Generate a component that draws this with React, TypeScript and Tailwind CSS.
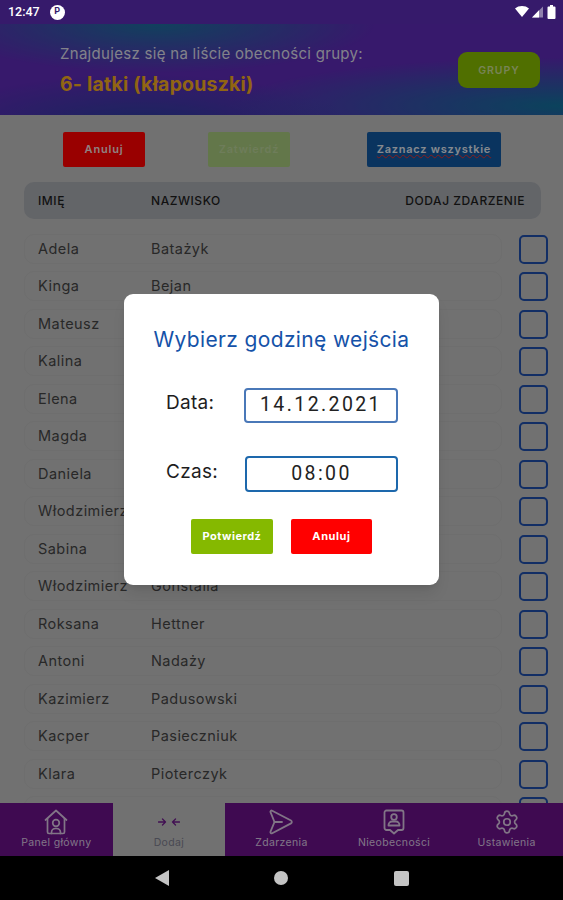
import { Settings } from "lucide-react";

const rows: [string, string][] = [
  ["Adela", "Batażyk"],
  ["Kinga", "Bejan"],
  ["Mateusz", ""],
  ["Kalina", ""],
  ["Elena", ""],
  ["Magda", ""],
  ["Daniela", ""],
  ["Włodzimierz", ""],
  ["Sabina", ""],
  ["Włodzimierz", "Gonstalla"],
  ["Roksana", "Hettner"],
  ["Antoni", "Nadaży"],
  ["Kazimierz", "Padusowski"],
  ["Kacper", "Pasieczniuk"],
  ["Klara", "Pioterczyk"],
  ["", ""],
];

function HomeIcon() {
  return (
    <svg width="24" height="26" viewBox="0 0 24 26" fill="none" stroke="currentColor" strokeWidth="1.7" strokeLinejoin="round" strokeLinecap="round">
      <path d="M1.500 11 12 1.500 22.500 11" />
      <path d="M3.500 9.500V23a1.500 1.500 0 0 0 1.500 1.500h14a1.500 1.500 0 0 0 1.500-1.500V9.500" />
      <circle cx="12" cy="14" r="3.300" />
      <path d="M7.500 24.500v-1a4 4 0 0 1 4-4h1a4 4 0 0 1 4 4v1" />
    </svg>
  );
}

function SendIcon() {
  return (
    <svg width="24" height="26" viewBox="0 0 24 26" fill="none" stroke="currentColor" strokeWidth="1.800" strokeLinejoin="round" strokeLinecap="round">
      <path d="M1.500 3.200c-.4-1.200.6-2 1.700-1.500l18.800 9.800c1.100.6 1.100 2.300 0 2.900L3.200 24.200c-1.100.5-2.100-.4-1.700-1.500L5.500 13z" />
      <path d="M5.500 13H13" />
    </svg>
  );
}

function AbsenceIcon() {
  return (
    <svg width="22" height="26" viewBox="0 0 22 26" fill="none" stroke="currentColor" strokeWidth="1.800" strokeLinejoin="round" strokeLinecap="round">
      <path d="M3.500 1.500h15a2 2 0 0 1 2 2V19a2 2 0 0 1-2 2H15l-4 3.500L7 21H3.500a2 2 0 0 1-2-2V3.500a2 2 0 0 1 2-2z" />
      <circle cx="11" cy="8" r="2.800" />
      <path d="M5.500 16.500V16a3.500 3.500 0 0 1 3.500-3.500h4a3.500 3.500 0 0 1 3.500 3.500v.5z" />
    </svg>
  );
}

function ArrowsIcon() {
  return (
    <svg width="22" height="10" viewBox="0 0 22 10" fill="none" stroke="currentColor" strokeWidth="1.300" strokeLinecap="round" strokeLinejoin="round">
      <path d="M0.500 5h7M4.500 2l3 3-3 3" />
      <path d="M21.500 5h-7M17.500 2l-3 3 3 3" />
    </svg>
  );
}

function Tab({ label, icon, active }: { label: string; icon: React.ReactNode; active?: boolean }) {
  return (
    <div className={`flex-1 h-full flex flex-col items-center justify-start pt-[6px] ${active ? "bg-[#bdbdbd] text-[#6d1a8a]" : "text-[#d8c4e0]"}`}>
      <div className="h-[26px] flex items-center justify-center">{icon}</div>
      <span className={`mt-[1px] text-[10.5px] leading-[14px] tracking-[0.35px] whitespace-nowrap ${active ? "text-[#7a7a8a]" : ""}`}>{label}</span>
    </div>
  );
}

export default function App() {
  return (
    <div className="w-[563px] h-[900px] flex flex-col overflow-hidden bg-black font-['Inter','Liberation_Sans',sans-serif]">
      {/* Status bar */}
      <div className="h-[24px] shrink-0 bg-[#361a6b] flex items-center justify-between pl-[8px] pr-[7px] text-white">
        <div className="flex items-center gap-[10px]">
          <span className="text-[12.5px] font-medium font-['Roboto',sans-serif]">12:47</span>
          <span className="w-[15px] h-[15px] rounded-full bg-white flex items-center justify-center text-[9px] font-bold text-[#361a6b] font-['Roboto',sans-serif]">P</span>
        </div>
        <div className="flex items-center gap-[2px]">
          <svg width="14" height="12" viewBox="0 0 14 12" fill="white"><path d="M0 2.500C3.800-.8 10.200-.8 14 2.500L7 11z" /></svg>
          <svg width="12" height="12" viewBox="0 0 12 12"><path d="M12 0.500V11.500H1z" fill="white" fillOpacity="0.45" /><path d="M8 4.300V11.500H1z" fill="white" /></svg>
          <svg width="9" height="14" viewBox="0 0 9 14" className="ml-[2px]"><path d="M3 0h3v1.500h1.500A1 1 0 0 1 8.500 2.500V13a1 1 0 0 1-1 1h-6a1 1 0 0 1-1-1V2.500a1 1 0 0 1 1-1H3z" fill="white" /></svg>
        </div>
      </div>

      {/* App body */}
      <div className="relative flex-1 flex flex-col overflow-hidden bg-[#bdbdbd]">
        <header className="h-[91px] shrink-0 flex items-center justify-between pl-[60px] pr-[23px] bg-[radial-gradient(ellipse_at_28%_0%,#1d6c9c_0%,transparent_38%),radial-gradient(ellipse_at_100%_90%,#12709a_0%,transparent_42%),radial-gradient(ellipse_at_25%_110%,#2a3f9c_0%,transparent_35%),linear-gradient(90deg,#5c2ab4,#5c2ab4)]">
          <div className="flex flex-col">
            <span className="text-[15px] leading-[20px] tracking-[0.3px] text-[#d9d9e6] whitespace-nowrap">Znajdujesz się na liście obecności grupy:</span>
            <span className="mt-[8px] text-[19.5px] leading-[24px] font-bold tracking-[0.2px] text-[#f2a91f] whitespace-nowrap">6- latki (kłapouszki)</span>
          </div>
          <div className="w-[82px] h-[36px] rounded-[9px] bg-[#86b900] flex items-center justify-center pt-[2px] text-[10.5px] font-semibold tracking-[1px] text-[#c8dc90]">GRUPY</div>
        </header>

        <div className="mt-[17px] h-[35px] shrink-0 flex items-stretch pl-[63px]">
          <div className="w-[82px] rounded-[2px] bg-[#ff0000] flex items-center justify-center text-[11px] font-semibold tracking-[0.8px] text-[#f0d8d8]">Anuluj</div>
          <div className="ml-[63px] w-[82px] rounded-[2px] bg-[#a6c67c] flex items-center justify-center text-[11px] font-semibold tracking-[0.8px] text-[#b7d096]">Zatwierdź</div>
          <div className="ml-[77px] w-[134px] rounded-[2px] bg-[#12589e] flex items-center justify-center text-[11px] font-semibold tracking-[0.75px] text-[#e0e6ee] whitespace-nowrap">
            <span className="underline decoration-wavy decoration-[#e03030] decoration-1">Zaznacz wszystkie</span>
          </div>
        </div>

        <div className="mt-[15px] mx-[24px] w-[517px] h-[37px] shrink-0 rounded-[10px] bg-[#a5a8ae] flex items-center pl-[14px] pr-[16px] text-[12px] font-medium tracking-[0.55px] text-[#1d1d1d]">
          <span className="w-[113px]">IMIĘ</span>
          <span>NAZWISKO</span>
          <span className="ml-auto">DODAJ ZDARZENIE</span>
        </div>

        <div className="mt-[11px] flex-1 min-h-0 overflow-hidden flex flex-col pl-[24px]">
          {rows.map(([first, last], i) => (
            <div key={i} className="h-[37.5px] shrink-0 flex items-center">
              <div className="w-[478px] h-[30px] rounded-[10px] border border-[#b7b7b7] flex items-center pl-[13px] text-[14.5px] tracking-[0.45px] text-[#444444]">
                <span className="w-[113px] whitespace-nowrap">{first}</span>
                <span className="whitespace-nowrap">{last}</span>
              </div>
              <div className="ml-[17px] mt-[1px] w-[29px] h-[29px] rounded-[5px] border-2 border-[#1f4ea8]" />
            </div>
          ))}
        </div>

        <nav className="h-[53px] shrink-0 flex bg-[#6a1188] relative">
          <Tab label="Panel główny" icon={<HomeIcon />} />
          <Tab label="Dodaj" icon={<ArrowsIcon />} active />
          <Tab label="Zdarzenia" icon={<SendIcon />} />
          <Tab label="Nieobecności" icon={<AbsenceIcon />} />
          <Tab label="Ustawienia" icon={<Settings size={26} strokeWidth={1.6} />} />
        </nav>

        {/* Dim + dialog */}
        <div className="absolute inset-0 z-10 bg-[#00000066] flex items-center justify-center">
          <div className="mb-[2px] w-[315px] h-[291px] rounded-[9px] bg-white shadow-lg flex flex-col items-center">
            <h2 className="mt-[32px] text-[21px] leading-[28px] tracking-[0.35px] text-[#1552a8] whitespace-nowrap">Wybierz godzinę wejścia</h2>

            <div className="mt-[34px] w-full flex items-center pl-[42px]">
              <span className="w-[78px] text-[19px] leading-[26px] tracking-[0.3px] text-[#1d1d1d] -mt-[4px]">Data:</span>
              <div className="w-[154px] h-[35px] rounded-[4px] border-2 border-[#4a78b8] flex items-center justify-center font-['Roboto',sans-serif] text-[19.5px] tracking-[2.4px] text-[#222222]">14.12.2021</div>
            </div>

            <div className="mt-[33px] w-full flex items-center pl-[42px]">
              <span className="w-[79px] text-[19px] leading-[26px] tracking-[0.3px] text-[#1d1d1d] -mt-[4px]">Czas:</span>
              <div className="w-[153px] h-[36px] rounded-[4px] border-2 border-[#1d68ac] flex items-center justify-center font-['Roboto',sans-serif] text-[19.5px] tracking-[2.4px] text-[#222222]">08:00</div>
            </div>

            <div className="mt-[27px] flex gap-[18px]">
              <div className="w-[82px] h-[35px] rounded-[2px] bg-[#85b900] flex items-center justify-center text-[11px] font-bold tracking-[0.5px] text-white">Potwierdź</div>
              <div className="w-[81px] h-[35px] rounded-[2px] bg-[#ff0000] flex items-center justify-center text-[11px] font-bold tracking-[0.6px] text-white">Anuluj</div>
            </div>
          </div>
        </div>
      </div>

      {/* System nav */}
      <div className="h-[44px] shrink-0 bg-black flex items-center justify-center text-[#c4c4c4]">
        <div className="w-[14px] h-[16px] mr-[105px] flex items-center justify-center">
          <svg width="14" height="16" viewBox="0 0 14 16" fill="currentColor"><path d="M14 0v16L0 8z" /></svg>
        </div>
        <div className="w-[14px] h-[14px] rounded-full bg-current" />
        <div className="w-[15px] h-[15px] ml-[106px] rounded-[2px] bg-current" />
      </div>
    </div>
  );
}
